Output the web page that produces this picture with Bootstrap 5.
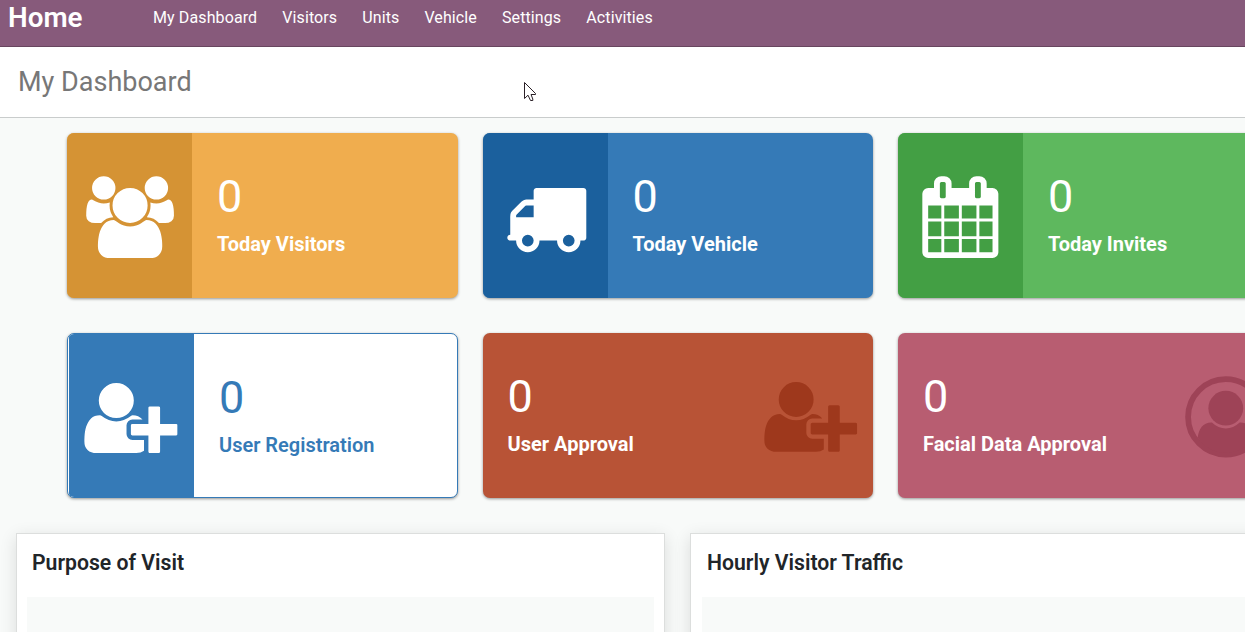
<!DOCTYPE html>
<html lang="en">
<head>
<meta charset="utf-8">
<meta name="viewport" content="width=device-width, initial-scale=1">
<title>My Dashboard</title>
<link href="https://cdn.jsdelivr.net/npm/bootstrap@5.3.0/dist/css/bootstrap.min.css" rel="stylesheet">
<style>
body{font-family:Roboto,"Liberation Sans",sans-serif;background:#f8faf9;height:100vh;overflow:hidden;color:#212529}
.topbar{height:47px;background:#875a7b;border-bottom:1px solid #68465f;padding:0 0 0 8px}
.topbar .navbar-brand{color:#fff;font-size:27.8px;font-weight:600;line-height:36px;width:145px;padding:0;margin:0}
.topbar .nav{gap:25px}
.topbar .nav-link{color:#fff;font-size:16px;letter-spacing:.11px;line-height:24px;padding:6px 0 0}
.page-title{height:71px;background:#fff;border-bottom:1px solid #c9cccc;padding-left:18px}
.page-title h1{font-size:27px;font-weight:400;line-height:71px;color:#777;margin:0}
.pointer{position:absolute;left:524px;top:82px}
.tiles{display:grid;grid-template-columns:repeat(3,390.5px);column-gap:25px;row-gap:35px;padding:15px 0 0 67px;width:1290px}
.tile{height:165px;border-radius:7px;color:#fff;box-shadow:0 1px 3px rgba(0,0,0,.4);overflow:hidden}
.tile-icon{width:125px;flex:none}
.tile-text{padding:39px 0 0 25px}
.tile-num{font-size:45px;line-height:50px;font-weight:400}
.tile-label{font-size:20px;line-height:24px;font-weight:700;margin-top:10px}
.tile svg{display:block;fill:currentColor}
.t-orange{background:#f0ad4e}.t-orange .tile-icon{background:#d59334}
.t-blue{background:#357ab7}.t-blue .tile-icon{background:#1b609d}
.t-green{background:#5eb85e}.t-green .tile-icon{background:#439f44}
.t-outline{background:#fff;border:1px solid #357ab7;padding-left:1px;color:#357ab7}
.t-outline .tile-icon{background:#357ab7;color:#fff}
.t-outline .tile-label{font-weight:600}
.t-rust{background:#b85336}.t-rust .ghost{color:#9e381c}
.t-rose{background:#b85d71}.t-rose .ghost{color:#9e4357}
.ghost{width:125px;flex:none;margin-left:auto}
.panels{display:grid;grid-template-columns:649px 649px;column-gap:25px;padding:35px 0 0 16px;width:1339px}
.panel{height:400px;background:#fff;border:1px solid #dcdedd;box-shadow:0 4px 16px rgba(0,0,0,.12);padding:0 10px}
.panel + .panel{padding-left:11px}
.panel h2{font-size:21.2px;font-weight:600;line-height:24px;margin:17px 0 22px 5px}
.plot{height:320px;background:#f8faf9}
</style>
</head>
<body class="position-relative">
<svg width="0" height="0" class="position-absolute" aria-hidden="true">
  <symbol id="user-plus" viewBox="0 0 2048 1792"><path d="M704 896q-159 0-271.500-112.500t-112.500-271.500 112.500-271.500 271.500-112.500 271.500 112.500 112.500 271.500-112.500 271.500-271.500 112.500zm960 128h352q13 0 22.500 9.500t9.500 22.500v192q0 13-9.500 22.500t-22.500 9.500h-352v352q0 13-9.500 22.500t-22.500 9.500h-192q-13 0-22.500-9.500t-9.500-22.500v-352h-352q-13 0-22.500-9.500t-9.500-22.500v-192q0-13 9.500-22.500t22.500-9.500h352v-352q0-13 9.500-22.500t22.500-9.500h192q13 0 22.500 9.500t9.500 22.500v352zm-736 224q0 52 38 90t90 38h256v238q-68 50-171 50h-874q-121 0-194-69t-73-190q0-53 3.500-103.500t14-109 26.500-108.500 43-97.500 62-81 85.500-53.500 111.500-20q19 0 39 17 79 61 154.500 91.500t164.500 30.500 164.500-30.500 154.500-91.500q20-17 39-17 132 0 217 96h-223q-52 0-90 38t-38 90v192z"/></symbol>
</svg>

<nav class="topbar navbar d-flex justify-content-start align-items-start flex-nowrap">
  <a class="navbar-brand" href="#">Home</a>
  <div class="nav flex-nowrap">
    <a class="nav-link" href="#">My Dashboard</a>
    <a class="nav-link" href="#">Visitors</a>
    <a class="nav-link" href="#">Units</a>
    <a class="nav-link" href="#">Vehicle</a>
    <a class="nav-link" href="#">Settings</a>
    <a class="nav-link" href="#">Activities</a>
  </div>
</nav>

<header class="page-title"><h1>My Dashboard</h1></header>

<main>
  <section class="tiles">
    <div class="tile t-orange d-flex">
      <div class="tile-icon"><svg width="125" height="165" viewBox="0 0 125 165"><path transform="translate(19.2 43.2) scale(.0457)" d="M593 896q-162 5-265 128h-134q-82 0-138-40.500t-56-118.500q0-353 124-353 6 0 43.500 21t97.500 42.500 119 21.500q67 0 133-23-5 37-5 66 0 139 81 256zM1664 1533q0 120-73 189.500t-194 69.500h-874q-121 0-194-69.500t-73-189.500q0-53 3.500-103.500t14-109 26.500-108.500 43-97.500 62-81 85.500-53.500 111.500-20q10 0 43 21.500t73 48 107 48 135 21.500 135-21.500 107-48 73-48 43-21.500q61 0 111.500 20t85.500 53.500 62 81 43 97.500 26.500 108.500 14 109 3.500 103.500zM640 256q0 106-75 181t-181 75-181-75-75-181 75-181 181-75 181 75 75 181zM1344 640q0 159-112.500 271.500t-271.500 112.500-271.500-112.500-112.500-271.500 112.500-271.500 271.500-112.500 271.500 112.500 112.500 271.500zM1920 865q0 78-56 118.500t-138 40.500h-134q-103-123-265-128 81-117 81-256 0-29-5-66 66 23 133 23 59 0 119-21.500t97.500-42.500 43.500-21q124 0 124 353zM1792 256q0 106-75 181t-181 75-181-75-75-181 75-181 181-75 181 75 75 181z"/></svg></div>
      <div class="tile-text"><div class="tile-num">0</div><div class="tile-label">Today Visitors</div></div>
    </div>
    <div class="tile t-blue d-flex">
      <div class="tile-icon"><svg width="125" height="165" viewBox="0 0 125 165"><path transform="translate(21.4 43.2) scale(.0457)" d="M640 1408q0-52-38-90t-90-38-90 38-38 90 38 90 90 38 90-38 38-90zM256 896h384v-256h-158q-13 0-22 9l-195 195q-9 9-9 22v30zM1536 1408q0-52-38-90t-90-38-90 38-38 90 38 90 90 38 90-38 38-90zM1792 320v1024q0 15-4 26.500t-13.500 18.500-16.500 11.500-23.500 6-22.500 2-25.500 0-22.500-.5q0 106-75 181t-181 75-181-75-75-181h-384q0 106-75 181t-181 75-181-75-75-181h-64q-3 0-22.500.5t-25.500 0-22.500-2-23.500-6-16.500-11.500-13.500-18.500-4-26.500q0-26 19-45t45-19v-320q0-8-.5-35t0-38 2.500-34.500 6.500-37 14-30.500 22.500-30l198-198q19-19 50.500-32t58.500-13h160v-192q0-26 19-45t45-19h1024q26 0 45 19t19 45z"/></svg></div>
      <div class="tile-text"><div class="tile-num">0</div><div class="tile-label">Today Vehicle</div></div>
    </div>
    <div class="tile t-green d-flex">
      <div class="tile-icon"><svg width="125" height="165" viewBox="0 0 125 165"><path transform="translate(21.4 43.2) scale(.0457)" d="M192 1664h288v-288h-288v288zm352 0h320v-288h-320v288zm-352-352h288v-320h-288v320zm352 0h320v-320h-320v320zm-352-384h288v-288h-288v288zm736 736h320v-288h-320v288zm-384-736h320v-288h-320v288zm768 736h288v-288h-288v288zm-384-352h320v-320h-320v320zm-352-864v-288q0-13-9.500-22.500t-22.500-9.500h-64q-13 0-22.500 9.500t-9.500 22.500v288q0 13 9.500 22.500t22.500 9.500h64q13 0 22.500-9.500t9.500-22.500zm736 864h288v-320h-288v320zm-384-384h320v-288h-320v288zm384 0h288v-288h-288v288zm32-480v-288q0-13-9.500-22.500t-22.500-9.500h-64q-13 0-22.500 9.500t-9.500 22.500v288q0 13 9.500 22.500t22.500 9.500h64q13 0 22.500-9.500t9.500-22.500zm384-64v1280q0 52-38 90t-90 38h-1408q-52 0-90-38t-38-90v-1280q0-52 38-90t90-38h128v-96q0-66 47-113t113-47h64q66 0 113 47t47 113v96h384v-96q0-66 47-113t113-47h64q66 0 113 47t47 113v96h128q52 0 90 38t38 90z"/></svg></div>
      <div class="tile-text"><div class="tile-num">0</div><div class="tile-label">Today Invites</div></div>
    </div>
    <div class="tile t-outline d-flex">
      <div class="tile-icon"><svg width="125" height="165" viewBox="0 0 125 165"><use href="#user-plus" x="15.200" y="43.200" width="93.4" height="81.700"/></svg></div>
      <div class="tile-text"><div class="tile-num">0</div><div class="tile-label">User Registration</div></div>
    </div>
    <div class="tile t-rust d-flex">
      <div class="tile-text"><div class="tile-num">0</div><div class="tile-label">User Approval</div></div>
      <div class="ghost"><svg width="125" height="165" viewBox="0 0 125 165"><use href="#user-plus" x="16.2" y="43.2" width="93" height="81.5"/></svg></div>
    </div>
    <div class="tile t-rose d-flex">
      <div class="tile-text"><div class="tile-num">0</div><div class="tile-label">Facial Data Approval</div></div>
      <div class="ghost"><svg width="125" height="165" viewBox="0 0 125 165"><g transform="translate(21.2 43.3) scale(.0453)"><circle cx="896" cy="896" r="832" fill="none" stroke="currentColor" stroke-width="128"/><circle cx="896" cy="704" r="384"/><path d="M276 1350C300 1160 400 1010 590 1020Q730 1152 896 1152T1202 1020C1392 1010 1492 1160 1516 1350A768 768 0 0 1 896 1690A768 768 0 0 1 276 1350z"/></g></svg></div>
    </div>
  </section>

  <section class="panels">
    <div class="panel"><h2>Purpose of Visit</h2><div class="plot"></div></div>
    <div class="panel"><h2>Hourly Visitor Traffic</h2><div class="plot"></div></div>
  </section>
</main>

<svg class="pointer" width="13" height="20" viewBox="0 0 13 20"><path d="M.5.5V16.500L4 13.200L6.500 18.500H8.800V17L7 12.500H11.500V11.500z" fill="#fff" stroke="#2a2027" stroke-width="1"/></svg>
<script src="https://cdn.jsdelivr.net/npm/bootstrap@5.3.0/dist/js/bootstrap.bundle.min.js"></script>
</body>
</html>
